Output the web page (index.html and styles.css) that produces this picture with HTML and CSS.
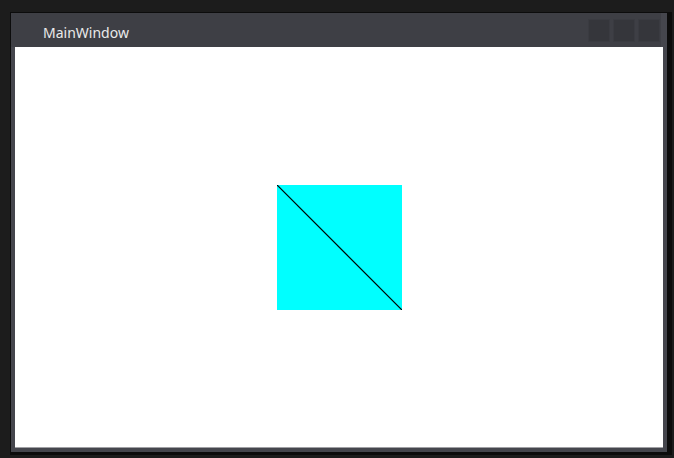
FILE: index.html
```html
<!DOCTYPE html>
<html>
<head>
<meta charset="utf-8">
<link rel="stylesheet" href="styles.css">
</head>
<body>
<div class="shadow">
  <div class="window">
    <div class="titlebar">
      <span class="title">MainWindow</span>
      <div class="buttons">
        <div class="btn"></div>
        <div class="btn"></div>
        <div class="btn"></div>
      </div>
    </div>
    <div class="content">
      <svg class="shape" width="125" height="125" viewBox="0 0 125 125">
        <rect x="0" y="0" width="125" height="125" fill="#00ffff"/>
        <line x1="0" y1="0" x2="125" y2="125" stroke="#000" stroke-width="1.2"/>
      </svg>
    </div>
  </div>
</div>
</body>
</html>
```
FILE: styles.css
```css
html, body {
  margin: 0;
  padding: 0;
  background: #1c1c1c;
  width: 674px;
  height: 458px;
  overflow: hidden;
}
.shadow {
  margin: 12px 0 0 10px;
  width: 657px;
  background: #0c0c0c;
  padding: 1px 4px 3px 1px;
  box-sizing: content-box;
  display: inline-block;
}
.window {
  width: 656px;
  height: 439px;
  background: #45464d;
  display: flex;
  flex-direction: column;
}
.titlebar {
  height: 34px;
  background: #3e3f45;
  margin-right: 6px;
  display: flex;
  align-items: center;
}
.title {
  font-family: "Noto Sans", "DejaVu Sans", sans-serif;
  font-size: 14px;
  color: #eaeaea;
  margin-left: 32px;
  margin-top: 5px;
}
.buttons {
  margin-left: auto;
  display: flex;
  gap: 3px;
  margin-right: 1px;
}
.btn {
  width: 22px;
  height: 23px;
  background: #35363b;
  box-sizing: border-box;
  border: 1px solid #3a3b41;
}
.content {
  margin: 0 4px 0 4px;
  height: 400px;
  background: #ffffff;
  display: flex;
  align-items: center;
  justify-content: center;
  border-bottom: 1px solid #a0a0a4;
}
.shape {
  display: block;
  margin-left: 1px;
}
```
